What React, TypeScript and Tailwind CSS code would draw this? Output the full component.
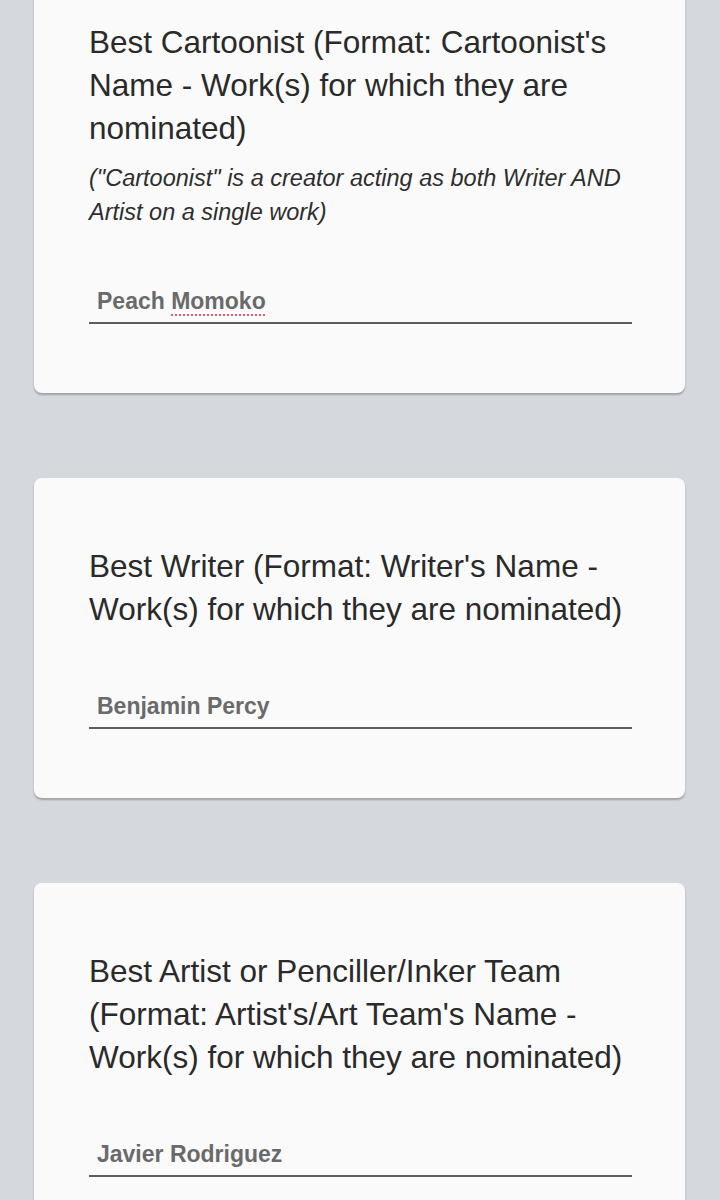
import React from 'react';

type Question = {
  id: number;
  title: string;
  hint?: string;
  answer: React.ReactNode;
};

const questions: Question[] = [
  {
    id: 1,
    title: "Best Cartoonist (Format: Cartoonist's Name - Work(s) for which they are nominated)",
    hint: '("Cartoonist" is a creator acting as both Writer AND Artist on a single work)',
    answer: (
      <>
        Peach{' '}
        <span className="underline decoration-dotted decoration-[#e0606a] decoration-2 underline-offset-[5px]">Momoko</span>
      </>
    ),
  },
  {
    id: 2,
    title: "Best Writer (Format: Writer's Name - Work(s) for which they are nominated)",
    answer: 'Benjamin Percy',
  },
  {
    id: 3,
    title: "Best Artist or Penciller/Inker Team (Format: Artist's/Art Team's Name - Work(s) for which they are nominated)",
    answer: 'Javier Rodriguez',
  },
];

const QuestionCard = ({ q, first }: { q: Question; first: boolean }) => (
  <div
    className={`bg-[#fafafa] rounded-lg shadow-[0_2px_2px_rgba(0,0,0,0.25)] pl-[55px] pr-[53px] pt-[67px] pb-[69px] font-['Liberation_Sans',Arial,sans-serif] ${
      first ? '-mt-[46px]' : ''
    }`}
  >
    <h2 className="text-[31.5px] leading-[43px] text-[#2a2a2a]">{q.title}</h2>
    {q.hint && (
      <p className="mt-[11px] text-[23.5px] leading-[34px] italic text-[#2e2e2e]">{q.hint}</p>
    )}
    <div className={`${q.hint ? 'mt-[58px]' : 'mt-[61px]'} border-b-2 border-[#5c5c5c] pl-[8px] pb-[7px]`}>
      <span className="block text-[23px] leading-[28px] font-bold text-[#6a6a6a]">{q.answer}</span>
    </div>
  </div>
);

export default function App() {
  return (
    <div className="min-h-[1200px] bg-[#d5d8dc] pl-[34px] pr-[35px] flex flex-col gap-[85px] overflow-hidden">
      {questions.map((q, i) => (
        <QuestionCard key={q.id} q={q} first={i === 0} />
      ))}
    </div>
  );
}
